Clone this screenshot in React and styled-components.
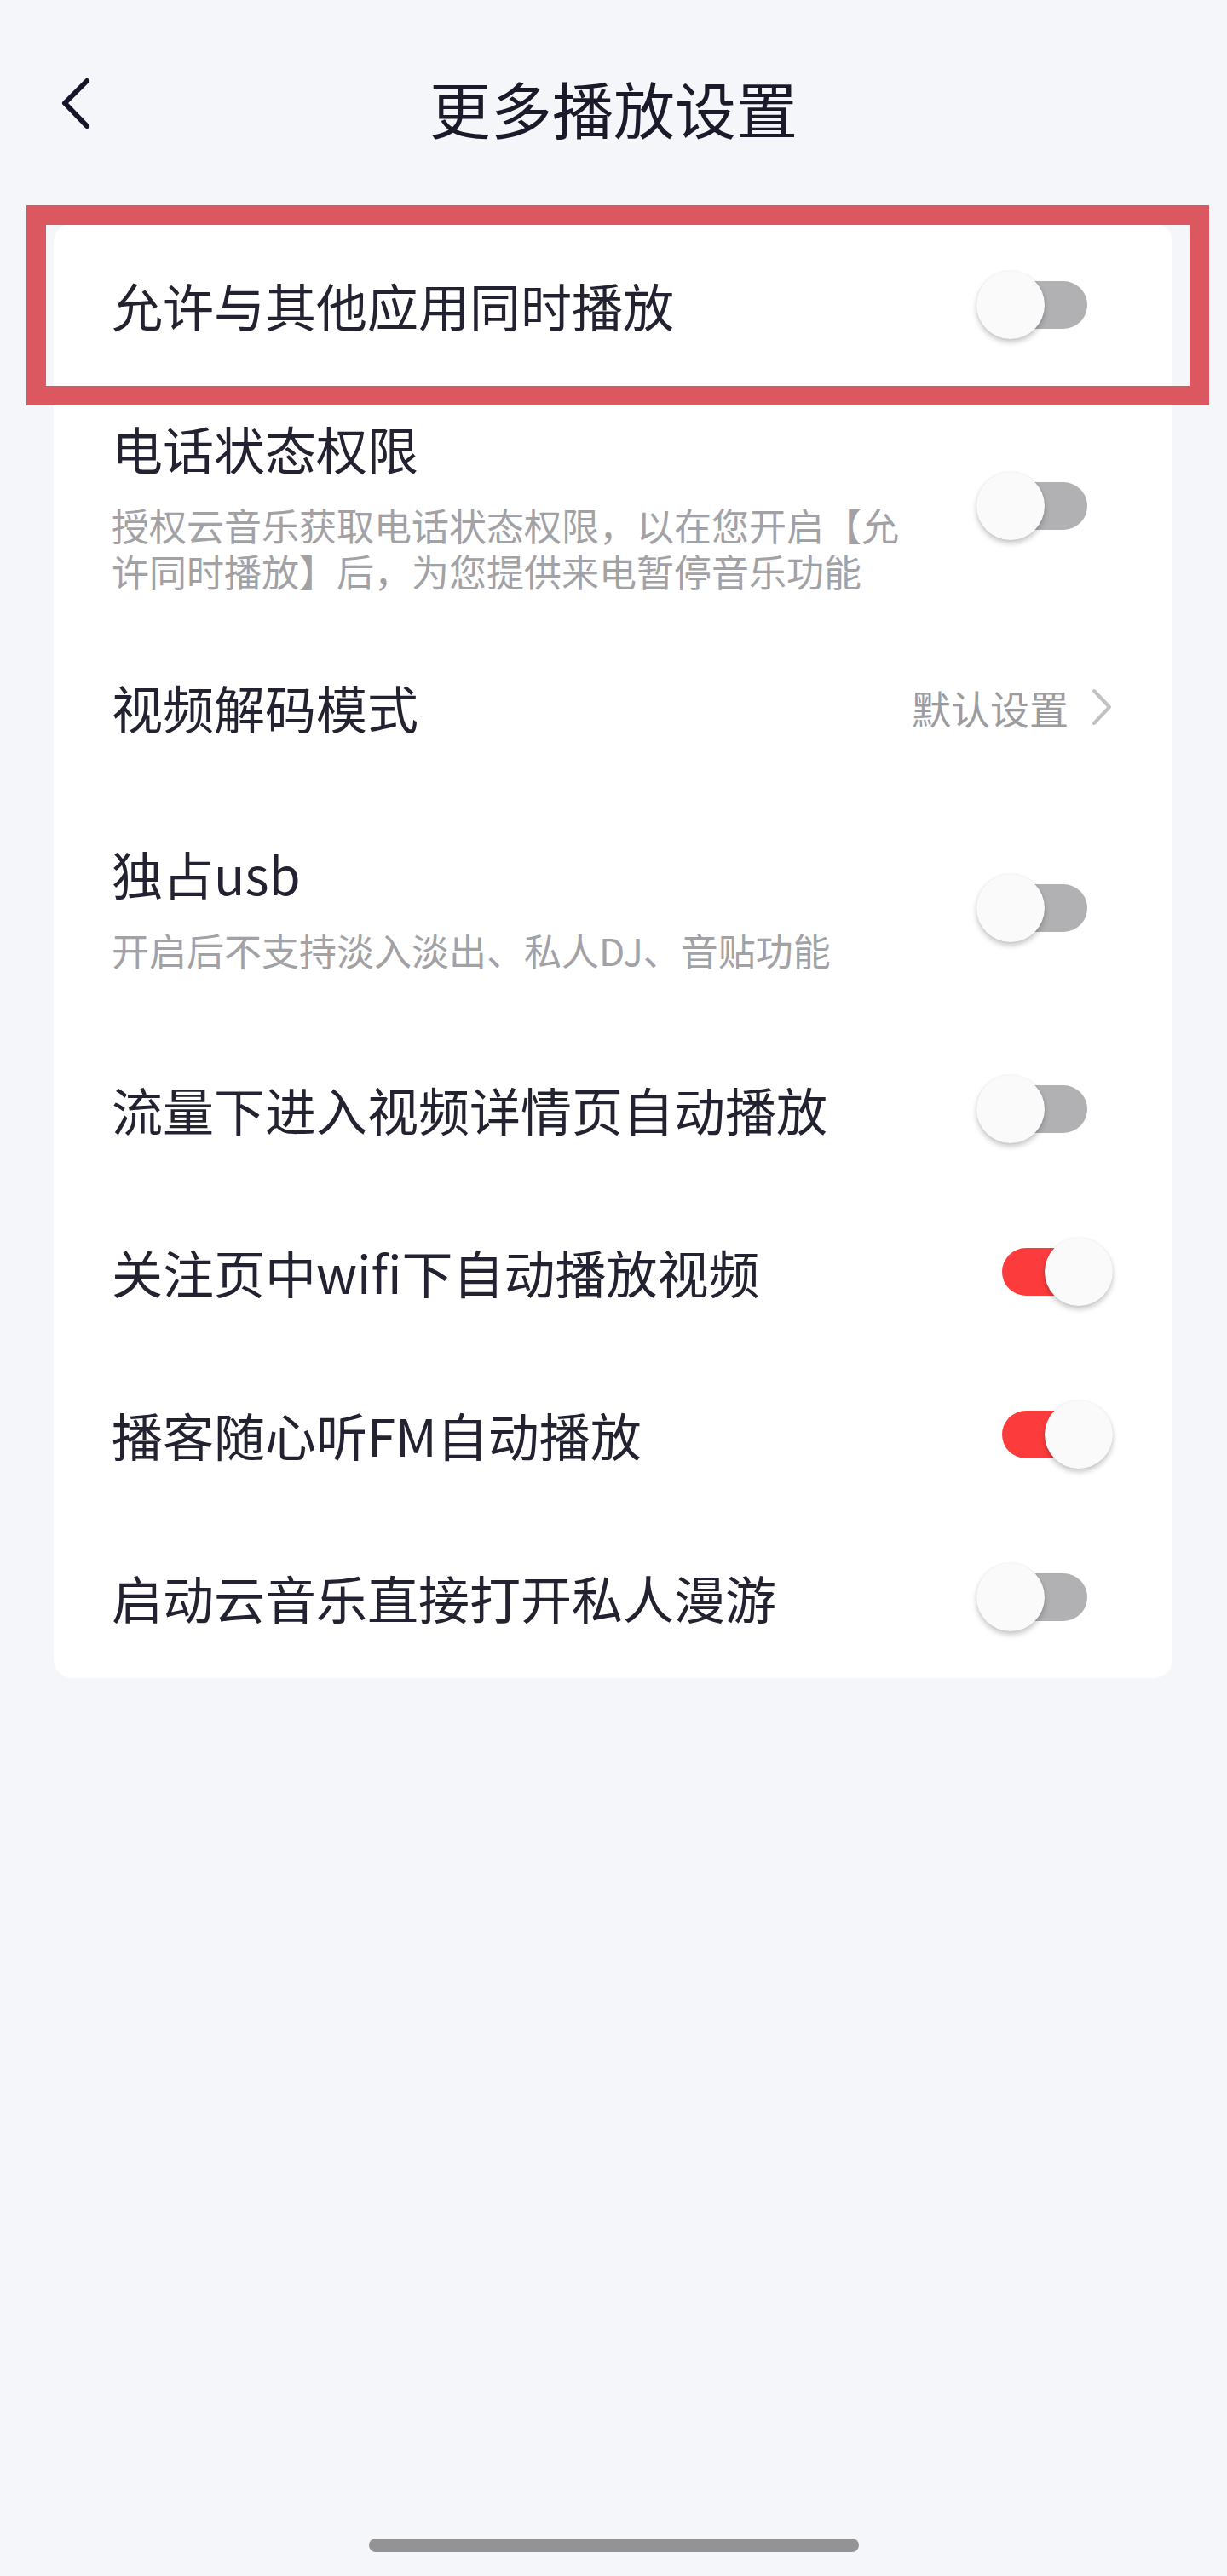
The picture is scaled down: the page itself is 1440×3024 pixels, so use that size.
import React from "react";
import styled, { createGlobalStyle } from "styled-components";

const Global = createGlobalStyle`
  html, body { margin: 0; padding: 0; background: #f5f6fa; }
  body { font-family: "Noto Sans CJK SC", "Noto Sans", sans-serif; -webkit-font-smoothing: antialiased; }
  * { box-sizing: border-box; }
`;

const Page = styled.div`
  position: relative;
  width: 1440px;
  min-height: 3024px;
  background: #f5f6fa;
  display: flex;
  flex-direction: column;
`;

const Header = styled.header`
  height: 252px;
  display: grid;
  grid-template-columns: 1fr auto 1fr;
  align-items: center;
  padding: 0 70px;
`;

const BackButton = styled.button`
  justify-self: start;
  width: 40px;
  height: 64px;
  padding: 0;
  border: 0;
  background: transparent;
  display: flex;
  align-items: center;
  justify-content: center;
  margin-top: -8px;
`;

const Title = styled.h1`
  margin: 0;
  font-size: 72px;
  font-weight: 400;
  line-height: 1.2;
  color: #1a1a2a;
  letter-spacing: 0;
`;

const Card = styled.section`
  margin: 10px 64px 0 63px;
  background: #ffffff;
  border-radius: 22px;
  display: flex;
  flex-direction: column;
`;

const Row = styled.div`
  display: flex;
  align-items: center;
  justify-content: space-between;
  min-height: ${(p) => (p.$tall ? "281px" : "191px")};
  padding: 0 70px 0 68px;
`;

const TextBlock = styled.div`
  display: flex;
  flex-direction: column;
  gap: 27px;
  max-width: 945px;
`;

const Label = styled.div`
  font-size: 60px;
  line-height: 72px;
  color: #222230;
`;

const Desc = styled.div`
  font-size: 44px;
  line-height: 54px;
  color: #a2a2a6;
`;

const Value = styled.div`
  display: flex;
  align-items: center;
  gap: 26px;
  font-size: 46px;
  line-height: 56px;
  color: #9c9ca0;
`;

const ToggleBox = styled.div`
  position: relative;
  width: 160px;
  height: 82px;
  flex-shrink: 0;
`;

const Track = styled.div`
  position: absolute;
  left: 30px;
  right: 30px;
  top: 13px;
  height: 56px;
  border-radius: 28px;
  background: ${(p) => (p.$on ? "#fc3c3c" : "#b1b1b3")};
`;

const Knob = styled.div`
  position: absolute;
  top: 1px;
  left: ${(p) => (p.$on ? "80px" : "0px")};
  width: 80px;
  height: 80px;
  border-radius: 50%;
  background: #fafafa;
  box-shadow: 0 4px 6px rgba(0, 0, 0, 0.22), 0 0 2px rgba(0, 0, 0, 0.08);
`;

const Highlight = styled.div`
  position: absolute;
  left: 31px;
  top: 241px;
  width: 1388px;
  height: 235px;
  border: 23px solid #dc5860;
  pointer-events: none;
`;

const HomeBar = styled.div`
  margin: auto auto 28px;
  width: 575px;
  height: 16px;
  border-radius: 8px;
  background: #939395;
`;

function Toggle({ on }) {
  return (
    <ToggleBox>
      <Track $on={on} />
      <Knob $on={on} />
    </ToggleBox>
  );
}

const rows = [
  { label: "允许与其他应用同时播放", toggle: false },
  {
    label: "电话状态权限",
    desc: "授权云音乐获取电话状态权限，以在您开启【允许同时播放】后，为您提供来电暂停音乐功能",
    toggle: false,
  },
  { label: "视频解码模式", value: "默认设置" },
  { label: "独占usb", desc: "开启后不支持淡入淡出、私人DJ、音贴功能", toggle: false },
  { label: "流量下进入视频详情页自动播放", toggle: false },
  { label: "关注页中wifi下自动播放视频", toggle: true },
  { label: "播客随心听FM自动播放", toggle: true },
  { label: "启动云音乐直接打开私人漫游", toggle: false },
];

export default function App() {
  return (
    <Page>
      <Global />
      <Header>
        <BackButton aria-label="返回">
          <svg width="40" height="64" viewBox="0 0 40 64" fill="none">
            <path
              d="M32 5 L6 31 L32 58"
              stroke="#16162a"
              strokeWidth="6"
              strokeLinecap="round"
              strokeLinejoin="round"
            />
          </svg>
        </BackButton>
        <Title>更多播放设置</Title>
        <div />
      </Header>
      <Card>
        {rows.map((r) => (
          <Row key={r.label} $tall={!!r.desc}>
            <TextBlock>
              <Label>{r.label}</Label>
              {r.desc && <Desc>{r.desc}</Desc>}
            </TextBlock>
            {r.value ? (
              <Value>
                {r.value}
                <svg width="26" height="44" viewBox="0 0 26 44" fill="none">
                  <path
                    d="M4 3 L22 22 L4 41"
                    stroke="#c2c2c4"
                    strokeWidth="4"
                    strokeLinecap="round"
                    strokeLinejoin="round"
                  />
                </svg>
              </Value>
            ) : (
              <Toggle on={r.toggle} />
            )}
          </Row>
        ))}
      </Card>
      <HomeBar />
      <Highlight />
    </Page>
  );
}
